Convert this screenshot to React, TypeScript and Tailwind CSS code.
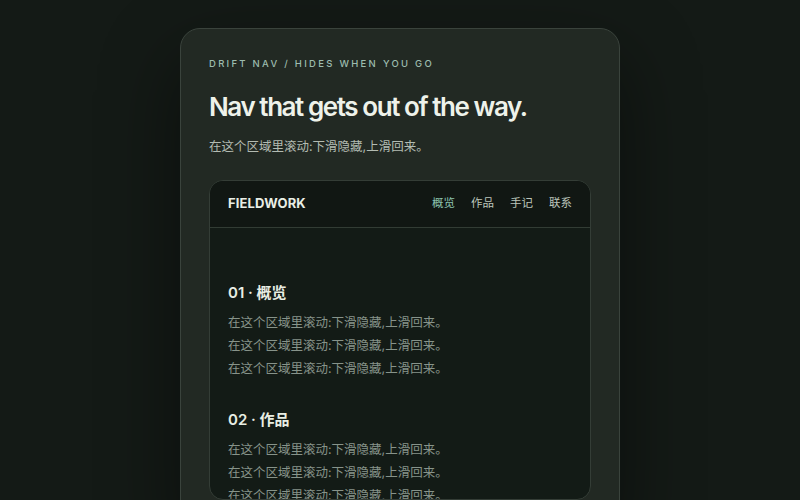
const FONT = "font-['Inter','Noto_Sans_CJK_SC',sans-serif]";

const LINE = '在这个区域里滚动:下滑隐藏,上滑回来。';

const sections = [
  { id: '01', title: '概览' },
  { id: '02', title: '作品' },
  { id: '03', title: '手记' },
];

const links = ['概览', '作品', '手记', '联系'];

export default function App() {
  return (
    <div className={`${FONT} h-[500px] overflow-hidden bg-[#141a16] flex justify-center pt-[28px]`}>
      <div className="w-[440px] shrink-0 self-start rounded-[20px] border border-[#3a433c] bg-[#222923] px-[28px] pt-[28px] pb-[28px] shadow-[0_30px_80px_rgba(0,0,0,0.45)]">
        {/* Intro */}
        <p className="text-[9.5px] leading-[14px] font-medium tracking-[0.24em] text-[#9dbcae] uppercase">
          Drift nav / hides when you go
        </p>
        <h1 className="mt-[21px] text-[26px] leading-[30px] font-semibold tracking-[-0.055em] text-[#eef2ea]">
          Nav that gets out of the way.
        </h1>
        <p className="mt-[15px] text-[12.5px] leading-[20px] text-[#b3bbb2]">{LINE}</p>

        {/* Scroll demo */}
        <div className="mt-[23px] h-[320px] overflow-hidden rounded-[14px] border border-[#343d36] bg-[#131b16]">
          <nav className="h-[47px] flex items-center justify-between px-[18px] border-b border-[#323c34] bg-[#111713]">
            <span className="text-[13px] font-bold tracking-[0.01em] text-[#e9eee6]">FIELDWORK</span>
            <div className="flex items-center gap-[16px] text-[11.5px]">
              {links.map((l, i) => (
                <span key={l} className={i === 0 ? 'text-[#8cc4b1]' : 'text-[#bcc5bb]'}>
                  {l}
                </span>
              ))}
            </div>
          </nav>
          <div className="px-[18px] pt-[54px] flex flex-col gap-[29px]">
            {sections.map((s) => (
              <section key={s.id}>
                <h2 className="text-[15px] leading-[22px] font-semibold text-[#e8eee3]">
                  {s.id} · {s.title}
                </h2>
                <div className="mt-[7px]">
                  {[0, 1, 2].map((n) => (
                    <p key={n} className="text-[12.5px] leading-[23px] text-[#87938a]">
                      {LINE}
                    </p>
                  ))}
                </div>
              </section>
            ))}
          </div>
        </div>
      </div>
    </div>
  );
}
